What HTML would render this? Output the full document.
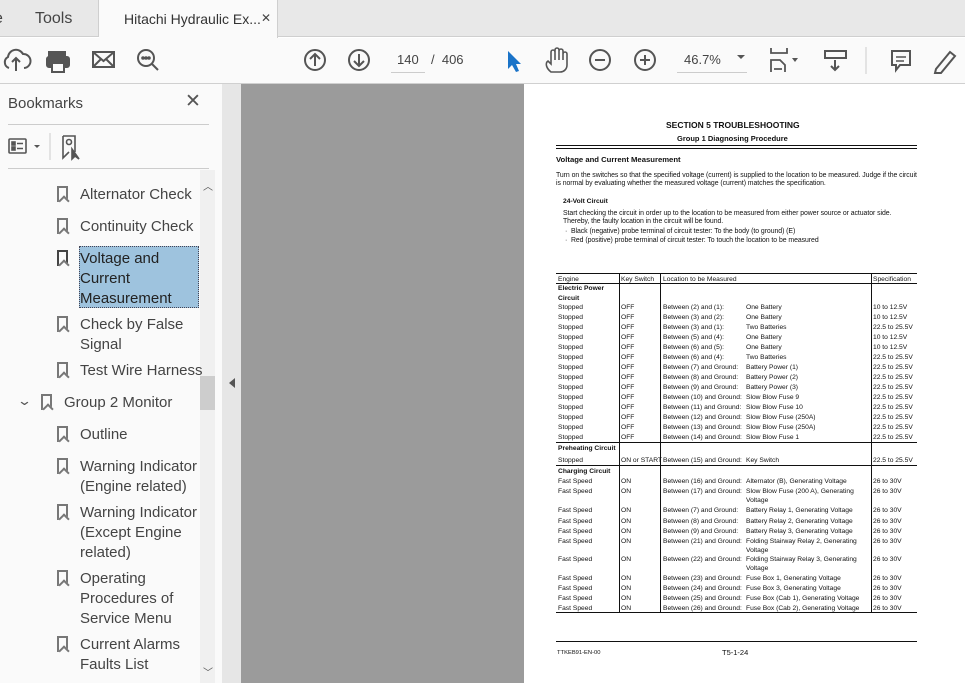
<!DOCTYPE html>
<html><head><meta charset="utf-8"><style>
*{margin:0;padding:0;box-sizing:border-box}
body{width:965px;height:683px;overflow:hidden;background:#fff;font-family:"Liberation Sans",sans-serif;position:relative}
.abs{position:absolute}
.t{position:absolute;font-size:6.7px;white-space:nowrap;color:#111;line-height:9px}
.p{font-size:6.9px;letter-spacing:-0.05px}
.b{font-weight:bold}
.bm{position:absolute;left:80px;font-size:15px;line-height:20px;color:#444}
.ic{position:absolute;width:11px;height:16px;border:2px solid #777;border-bottom:none}
.ic:after{content:"";position:absolute;left:0.5px;bottom:-3px;width:6px;height:6px;border-left:2px solid #777;border-top:2px solid #777;transform:rotate(45deg);background:#fafafa}
.hl{position:absolute;height:1px;background:#111}
.vl{position:absolute;width:1px;background:#111}
.r10{line-height:10px}
</style></head><body>
<!-- tab bar -->
<div class="abs" style="left:0;top:0;width:965px;height:37px;background:#e8e8e8;border-bottom:1px solid #cfcfcf"></div>
<div class="abs" style="left:98px;top:0;width:1px;height:37px;background:#cfcfcf"></div>
<div class="abs" style="left:99px;top:0;width:179px;height:38px;background:#fafafa;border-right:1px solid #cfcfcf"></div>
<div class="abs" style="left:-6px;top:10px;font-size:16px;color:#444">e</div>
<div class="abs" style="left:35px;top:10px;font-size:16px;color:#444">Tools</div>
<div class="abs" style="left:124px;top:11px;font-size:14px;color:#333">Hitachi Hydraulic Ex...</div>
<div class="abs" style="left:261px;top:11px;font-size:12px;color:#444">✕</div>
<!-- toolbar -->
<div class="abs" style="left:0;top:38px;width:965px;height:46px;background:#fafafa;border-bottom:1px solid #d0d0d0"></div>
<svg class="abs" style="left:0;top:38px" width="965" height="46" fill="none" stroke="#555" stroke-width="2">
<path d="M9 30 A6 6 0 0 1 8 19 A8 8 0 0 1 23 16 A6 6 0 0 1 24 30 M16 33 V20 M12 24 L16 20 L20 24"/>
<rect x="49" y="14" width="16" height="5" fill="#555"/><rect x="47" y="19" width="22" height="10" rx="2" fill="#555"/><rect x="52" y="25" width="12" height="9" fill="#fafafa"/>
<rect x="93" y="14" width="21" height="15"/><path d="M93 14 L103.5 23 L114 14 M93 29 L101 21 M114 29 L106 21"/>
<circle cx="146" cy="20" r="8"/><path d="M152 26 L158 32"/><circle cx="143" cy="20" r="0.8" fill="#555"/><circle cx="146" cy="20" r="0.8" fill="#555"/><circle cx="149" cy="20" r="0.8" fill="#555"/>
<circle cx="315" cy="22" r="10"/><path d="M315 28 V16 M310 21 L315 16 L320 21"/>
<circle cx="359" cy="22" r="10"/><path d="M359 16 V28 M354 23 L359 28 L364 23"/>
<path d="M508 13 L508 31 L512 27 L516 34 L519 33 L516 26 L521 26 Z" fill="#1a73c8" stroke="none"/>
<path d="M551 34 C546 30 545 25 548 23 L551 26 V14 a2 2 0 0 1 4 0 V22 V12 a2 2 0 0 1 4 0 V22 V13 a2 2 0 0 1 4 0 V22 V16 a2 2 0 0 1 4 0 V27 C567 31 564 34 560 34 Z" stroke-width="1.6"/>
<circle cx="600" cy="22" r="10"/><path d="M595 22 H605"/>
<circle cx="645" cy="22" r="10"/><path d="M640 22 H650 M645 17 V27"/>
<path d="M771 10 V15 H787 V10 M771 34 V22 H780 L785 27 V34 M774 31 H782" stroke-width="1.8"/><path d="M792 20 H798 L795 24Z" fill="#555" stroke="none"/>
<rect x="825" y="13" width="21" height="7"/><path d="M835 22 V32 M831 28 L835 32 L839 28"/>
<path d="M866 9 V36" stroke="#ccc" stroke-width="1"/>
<path d="M892 13 H910 V27 H900 L896 32 V27 H892 Z"/><path d="M896 19 H906 M896 23 H904" stroke-width="1.5"/>
<path d="M936 31 L950 14 L955 18 L941 35 L935 35 Z"/>
</svg>
<div class="abs" style="left:737px;top:55px;width:0;height:0;border-left:4px solid transparent;border-right:4px solid transparent;border-top:4px solid #555"></div>
<div class="abs" style="left:397px;top:52px;font-size:13px;color:#444">140</div>
<div class="abs" style="left:391px;top:72px;width:34px;height:1px;background:#ccc"></div>
<div class="abs" style="left:431px;top:52px;font-size:13px;color:#444">/&nbsp;&nbsp;406</div>
<div class="abs" style="left:684px;top:52px;font-size:13px;color:#444">46.7%</div>
<div class="abs" style="left:677px;top:72px;width:70px;height:1px;background:#ccc"></div>
<!-- sidebar -->
<div class="abs" style="left:0;top:84px;width:222px;height:599px;background:#fafafa"></div>
<div class="abs" style="left:8px;top:95px;font-size:15px;color:#444">Bookmarks</div>
<div class="abs" style="left:185px;top:90px;font-size:19px;color:#555">✕</div>
<div class="abs" style="left:8px;top:124px;width:201px;height:1px;background:#ccc"></div>
<div class="abs" style="left:8px;top:168px;width:201px;height:1px;background:#ccc"></div>
<svg class="abs" style="left:0;top:130px" width="100" height="34" fill="none" stroke="#555" stroke-width="1.6">
<rect x="9" y="9" width="17" height="14" rx="1"/><rect x="12" y="12" width="3" height="3" fill="#555"/><rect x="12" y="17" width="3" height="3" fill="#555"/><path d="M17 13.5 H23 M17 18.5 H23"/>
<path d="M34 15 H40 L37 18Z" fill="#555" stroke="none"/>
<path d="M50 3 V30" stroke="#ccc" stroke-width="1"/>
<path d="M63 6 H75 V22 M63 6 V28 L69 22"/><circle cx="69" cy="12" r="2.5"/><path d="M72 19 L72 29 L75 26 L79 29Z" fill="#555"/>
</svg>
<div class="abs" style="left:200px;top:170px;width:15px;height:513px;background:#f0f0f0"></div>
<div class="abs" style="left:200px;top:376px;width:15px;height:34px;background:#cdcdcd"></div>
<div class="abs" style="left:203px;top:178px;font-size:10px;color:#555">︿</div>
<div class="abs" style="left:203px;top:664px;font-size:10px;color:#555">﹀</div>
<div class="abs" style="left:222px;top:84px;width:19px;height:599px;background:#e6e6e6"></div>
<div class="abs" style="left:229px;top:378px;width:0;height:0;border-top:5px solid transparent;border-bottom:5px solid transparent;border-right:6px solid #555"></div>

<div class="abs" style="left:79px;top:246px;width:120px;height:62px;background:#9ec3de;border:1px dotted #445"></div>
<div class="ic" style="left:57px;top:186px"></div><div class="bm" style="top:185px">Alternator Check</div>
<div class="ic" style="left:57px;top:218px"></div><div class="bm" style="top:217px">Continuity Check</div>
<div class="ic" style="left:57px;top:250px;border-color:#444"></div><div class="bm" style="top:249px;color:#222">Voltage and<br>Current<br>Measurement</div>
<div class="ic" style="left:57px;top:316px"></div><div class="bm" style="top:315px">Check by False<br>Signal</div>
<div class="ic" style="left:57px;top:362px"></div><div class="bm" style="top:361px">Test Wire Harness</div>
<div class="abs" style="left:19px;top:393px;font-size:13px;color:#555;transform:scaleX(1.4)">⌄</div>
<div class="ic" style="left:41px;top:394px"></div><div class="bm" style="left:64px;top:393px">Group 2 Monitor</div>
<div class="ic" style="left:57px;top:426px"></div><div class="bm" style="top:425px">Outline</div>
<div class="ic" style="left:57px;top:458px"></div><div class="bm" style="top:457px">Warning Indicator<br>(Engine related)</div>
<div class="ic" style="left:57px;top:504px"></div><div class="bm" style="top:503px">Warning Indicator<br>(Except Engine<br>related)</div>
<div class="ic" style="left:57px;top:570px"></div><div class="bm" style="top:569px">Operating<br>Procedures of<br>Service Menu</div>
<div class="ic" style="left:57px;top:636px"></div><div class="bm" style="top:635px">Current Alarms<br>Faults List</div>
<!-- document area -->
<div class="abs" style="left:241px;top:84px;width:724px;height:599px;background:#9b9b9b"></div>
<div class="abs" style="left:524px;top:84px;width:441px;height:599px;background:#fff"></div>
<div class="t b" style="left:666px;top:120px;font-size:8.5px;line-height:10px">SECTION 5 TROUBLESHOOTING</div>
<div class="t b" style="left:677px;top:134px;font-size:7.5px;line-height:9px">Group 1 Diagnosing Procedure</div>
<div class="hl" style="left:556px;top:145px;width:361px"></div>
<div class="hl" style="left:556px;top:148px;width:361px"></div>
<div class="t b" style="left:556px;top:155px;font-size:7.7px;line-height:9px">Voltage and Current Measurement</div>
<div class="t p" style="left:556px;top:172px;line-height:8px">Turn on the switches so that the specified voltage (current) is supplied to the location to be measured. Judge if the circuit<br>is normal by evaluating whether the measured voltage (current) matches the specification.</div>
<div class="t b" style="left:563px;top:197px">24-Volt Circuit</div>
<div class="t p" style="left:563px;top:210px;line-height:8px">Start checking the circuit in order up to the location to be measured from either power source or actuator side.<br>Thereby, the faulty location in the circuit will be found.</div>
<div class="t p" style="left:565px;top:227px">·&nbsp; Black (negative) probe terminal of circuit tester: To the body (to ground) (E)</div>
<div class="t p" style="left:565px;top:236px">·&nbsp; Red (positive) probe terminal of circuit tester: To touch the location to be measured</div>
<!-- table lines -->
<div class="hl" style="left:556px;top:273px;width:361px"></div>
<div class="hl" style="left:556px;top:283px;width:361px"></div>
<div class="hl" style="left:556px;top:442px;width:361px"></div>
<div class="hl" style="left:556px;top:465px;width:361px"></div>
<div class="hl" style="left:556px;top:612px;width:361px"></div>
<div class="vl" style="left:619px;top:273px;height:339px"></div>
<div class="vl" style="left:660px;top:273px;height:339px"></div>
<div class="vl" style="left:871px;top:273px;height:339px"></div>
<div class="t" style="left:558px;top:275px">Engine</div><div class="t" style="left:621px;top:275px">Key Switch</div><div class="t" style="left:663px;top:275px">Location to be Measured</div><div class="t" style="left:873px;top:275px">Specification</div>
<div class="t b" style="left:558px;top:284px">Electric Power</div><div class="t b" style="left:558px;top:294px">Circuit</div>

<div class="t r10" style="left:558px;top:303px">Stopped<br>Stopped<br>Stopped<br>Stopped<br>Stopped<br>Stopped<br>Stopped<br>Stopped<br>Stopped<br>Stopped<br>Stopped<br>Stopped<br>Stopped<br>Stopped</div>
<div class="t r10" style="left:621px;top:303px">OFF<br>OFF<br>OFF<br>OFF<br>OFF<br>OFF<br>OFF<br>OFF<br>OFF<br>OFF<br>OFF<br>OFF<br>OFF<br>OFF</div>
<div class="t r10" style="left:663px;top:303px">Between (2) and (1):<br>Between (3) and (2):<br>Between (3) and (1):<br>Between (5) and (4):<br>Between (6) and (5):<br>Between (6) and (4):<br>Between (7) and Ground:<br>Between (8) and Ground:<br>Between (9) and Ground:<br>Between (10) and Ground:<br>Between (11) and Ground:<br>Between (12) and Ground:<br>Between (13) and Ground:<br>Between (14) and Ground:</div>
<div class="t r10" style="left:746px;top:303px">One Battery<br>One Battery<br>Two Batteries<br>One Battery<br>One Battery<br>Two Batteries<br>Battery Power (1)<br>Battery Power (2)<br>Battery Power (3)<br>Slow Blow Fuse 9<br>Slow Blow Fuse 10<br>Slow Blow Fuse (250A)<br>Slow Blow Fuse (250A)<br>Slow Blow Fuse 1</div>
<div class="t r10" style="left:873px;top:303px">10 to 12.5V<br>10 to 12.5V<br>22.5 to 25.5V<br>10 to 12.5V<br>10 to 12.5V<br>22.5 to 25.5V<br>22.5 to 25.5V<br>22.5 to 25.5V<br>22.5 to 25.5V<br>22.5 to 25.5V<br>22.5 to 25.5V<br>22.5 to 25.5V<br>22.5 to 25.5V<br>22.5 to 25.5V</div>

<div class="t b" style="left:558px;top:444px">Preheating Circuit</div>
<div class="t" style="left:558px;top:456px">Stopped</div><div class="t" style="left:621px;top:456px">ON or START</div><div class="t" style="left:663px;top:456px">Between (15) and Ground:</div><div class="t" style="left:746px;top:456px">Key Switch</div><div class="t" style="left:873px;top:456px">22.5 to 25.5V</div>
<div class="t b" style="left:558px;top:467px">Charging Circuit</div>

<div class="t" style="left:558px;top:477px">Fast Speed</div><div class="t" style="left:621px;top:477px">ON</div><div class="t" style="left:663px;top:477px">Between (16) and Ground:</div><div class="t" style="left:746px;top:477px">Alternator (B), Generating Voltage</div><div class="t" style="left:873px;top:477px">26 to 30V</div>
<div class="t" style="left:558px;top:487px">Fast Speed</div><div class="t" style="left:621px;top:487px">ON</div><div class="t" style="left:663px;top:487px">Between (17) and Ground:</div><div class="t" style="left:746px;top:487px">Slow Blow Fuse (200 A), Generating<br>Voltage</div><div class="t" style="left:873px;top:487px">26 to 30V</div>
<div class="t" style="left:558px;top:506px">Fast Speed</div><div class="t" style="left:621px;top:506px">ON</div><div class="t" style="left:663px;top:506px">Between (7) and Ground:</div><div class="t" style="left:746px;top:506px">Battery Relay 1, Generating Voltage</div><div class="t" style="left:873px;top:506px">26 to 30V</div>
<div class="t" style="left:558px;top:517px">Fast Speed</div><div class="t" style="left:621px;top:517px">ON</div><div class="t" style="left:663px;top:517px">Between (8) and Ground:</div><div class="t" style="left:746px;top:517px">Battery Relay 2, Generating Voltage</div><div class="t" style="left:873px;top:517px">26 to 30V</div>
<div class="t" style="left:558px;top:527px">Fast Speed</div><div class="t" style="left:621px;top:527px">ON</div><div class="t" style="left:663px;top:527px">Between (9) and Ground:</div><div class="t" style="left:746px;top:527px">Battery Relay 3, Generating Voltage</div><div class="t" style="left:873px;top:527px">26 to 30V</div>
<div class="t" style="left:558px;top:537px">Fast Speed</div><div class="t" style="left:621px;top:537px">ON</div><div class="t" style="left:663px;top:537px">Between (21) and Ground:</div><div class="t" style="left:746px;top:537px">Folding Stairway Relay 2, Generating<br>Voltage</div><div class="t" style="left:873px;top:537px">26 to 30V</div>
<div class="t" style="left:558px;top:555px">Fast Speed</div><div class="t" style="left:621px;top:555px">ON</div><div class="t" style="left:663px;top:555px">Between (22) and Ground:</div><div class="t" style="left:746px;top:555px">Folding Stairway Relay 3, Generating<br>Voltage</div><div class="t" style="left:873px;top:555px">26 to 30V</div>
<div class="t" style="left:558px;top:574px">Fast Speed</div><div class="t" style="left:621px;top:574px">ON</div><div class="t" style="left:663px;top:574px">Between (23) and Ground:</div><div class="t" style="left:746px;top:574px">Fuse Box 1, Generating Voltage</div><div class="t" style="left:873px;top:574px">26 to 30V</div>
<div class="t" style="left:558px;top:584px">Fast Speed</div><div class="t" style="left:621px;top:584px">ON</div><div class="t" style="left:663px;top:584px">Between (24) and Ground:</div><div class="t" style="left:746px;top:584px">Fuse Box 3, Generating Voltage</div><div class="t" style="left:873px;top:584px">26 to 30V</div>
<div class="t" style="left:558px;top:594px">Fast Speed</div><div class="t" style="left:621px;top:594px">ON</div><div class="t" style="left:663px;top:594px">Between (25) and Ground:</div><div class="t" style="left:746px;top:594px">Fuse Box (Cab 1), Generating Voltage</div><div class="t" style="left:873px;top:594px">26 to 30V</div>
<div class="t" style="left:558px;top:604px">Fast Speed</div><div class="t" style="left:621px;top:604px">ON</div><div class="t" style="left:663px;top:604px">Between (26) and Ground:</div><div class="t" style="left:746px;top:604px">Fuse Box (Cab 2), Generating Voltage</div><div class="t" style="left:873px;top:604px">26 to 30V</div>

<div class="hl" style="left:556px;top:641px;width:361px"></div>
<div class="t" style="left:557px;top:649px;font-size:5.8px">TTKEB91-EN-00</div>
<div class="t" style="left:722px;top:648px;font-size:7.5px;line-height:9px">T5-1-24</div>
</body></html>
